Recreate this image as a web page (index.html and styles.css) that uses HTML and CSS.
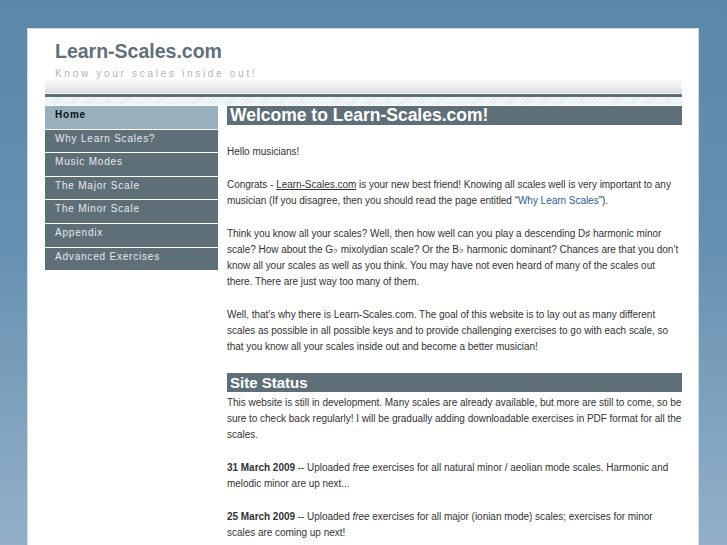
FILE: index.html
```html
<!DOCTYPE html>
<html>
<head>
<meta charset="utf-8">
<title>Learn-Scales.com</title>
<link rel="stylesheet" href="styles.css">
</head>
<body>
<div class="page">
  <header class="site-header">
    <div class="site-title">Learn-Scales.com</div>
    <div class="site-tagline">Know your scales inside out!</div>
  </header>
  <div class="band">
    <div class="band-grad"></div>
    <div class="band-dark"></div>
    <div class="band-hatch"></div>
  </div>
  <div class="layout">
    <nav class="sidenav">
      <a class="nav-item active" href="#">Home</a>
      <a class="nav-item" href="#">Why Learn Scales?</a>
      <a class="nav-item" href="#">Music Modes</a>
      <a class="nav-item" href="#">The Major Scale</a>
      <a class="nav-item" href="#">The Minor Scale</a>
      <a class="nav-item" href="#">Appendix</a>
      <a class="nav-item" href="#">Advanced Exercises</a>
    </nav>
    <main class="content">
      <h1 class="bar-title big">Welcome to Learn-Scales.com!</h1>
      <p>Hello musicians!</p>
      <p>Congrats - <a class="plain-link" href="#">Learn-Scales.com</a> is your new best friend! Knowing all scales well is very important to any musician (If you disagree, then you should read the page entitled “<a class="blue-link" href="#">Why Learn Scales</a>”).</p>
      <p>Think you know all your scales? Well, then how well can you play a descending D♯ harmonic minor scale? How about the G♭ mixolydian scale? Or the B♭ harmonic dominant? Chances are that you don’t know all your scales as well as you think. You may have not even heard of many of the scales out there. There are just way too many of them.</p>
      <p>Well, that’s why there is Learn-Scales.com. The goal of this website is to lay out as many different scales as possible in all possible keys and to provide challenging exercises to go with each scale, so that you know all your scales inside out and become a better musician!</p>
      <h2 class="bar-title small">Site Status</h2>
      <p>This website is still in development. Many scales are already available, but more are still to come, so be sure to check back regularly! I will be gradually adding downloadable exercises in PDF format for all the scales.</p>
      <p><b>31 March 2009</b> -- Uploaded <i>free</i> exercises for all natural minor / aeolian mode scales. Harmonic and melodic minor are up next...</p>
      <p><b>25 March 2009</b> -- Uploaded <i>free</i> exercises for all major (ionian mode) scales; exercises for minor scales are coming up next!</p>
    </main>
  </div>
</div>
</body>
</html>
```

FILE: styles.css
```css
html, body {
  margin: 0;
  padding: 0;
  height: 100%;
}
body {
  background: linear-gradient(to bottom, #5b87a8 0%, #6690b1 45%, #93b0c8 100%);
  font-family: "Liberation Sans", Arial, sans-serif;
  overflow: hidden;
}
.page {
  margin: 28px 0 0 27px;
  width: 672px;
  min-height: 560px;
  background: #ffffff;
  box-sizing: border-box;
  border: 1px solid #cfdbe5;
  border-bottom: none;
  padding: 10px 16px 0 17px;
}
.site-header {
  padding-left: 10px;
  padding-top: 1px;
  height: 40px;
}
.site-title {
  font-size: 19.5px;
  font-weight: bold;
  color: #5f707b;
  line-height: 22px;
}
.site-tagline {
  margin-top: 6px;
  font-size: 10px;
  line-height: 12px;
  letter-spacing: 2.7px;
  color: #a9b8c5;
}
.band-grad {
  height: 13px;
  background: linear-gradient(to bottom, #f7f8f9 0%, #eceef0 55%, #d9dcdf 100%);
  border-bottom: 1px solid #ffffff;
}
.band-dark {
  height: 3px;
  background: #5f6f78;
}
.band-hatch {
  height: 8px;
  background: repeating-linear-gradient(135deg, #dfe7ef 0px, #dfe7ef 1px, #f5f8fb 1px, #f5f8fb 3px);
  border-bottom: 1px solid #ffffff;
}
.layout {
  display: flex;
  gap: 9px;
  align-items: flex-start;
}
.sidenav {
  width: 173px;
  flex: none;
  display: flex;
  flex-direction: column;
}
.nav-item {
  display: block;
  box-sizing: border-box;
  height: 23.6px;
  padding: 3px 10px 0;
  font-size: 10px;
  line-height: 12px;
  letter-spacing: 0.8px;
  color: #e4e9ed;
  background: #5f6f78;
  text-decoration: none;
  border-bottom: 1px solid #ffffff;
}
.nav-item.active {
  background: #98afbe;
  color: #111111;
  font-weight: bold;
}
.content {
  width: 455px;
  flex: none;
  font-size: 10px;
  line-height: 16px;
  letter-spacing: -0.03px;
  color: #333333;
}
.bar-title {
  margin: 0;
  background: #5f6f78;
  color: #ffffff;
  font-weight: bold;
  height: 19px;
  padding-left: 3px;
  letter-spacing: 0;
}
.bar-title.big {
  font-size: 17.5px;
  line-height: 19px;
  margin-bottom: 19px;
}
.bar-title.small {
  font-size: 15px;
  line-height: 19px;
  margin-top: 18px;
  margin-bottom: 3px;
}
.content p {
  margin: 0 0 17px;
}
.plain-link {
  color: #333333;
  text-decoration: underline;
}
.blue-link {
  color: #2b5c98;
  text-decoration: none;
}
```
